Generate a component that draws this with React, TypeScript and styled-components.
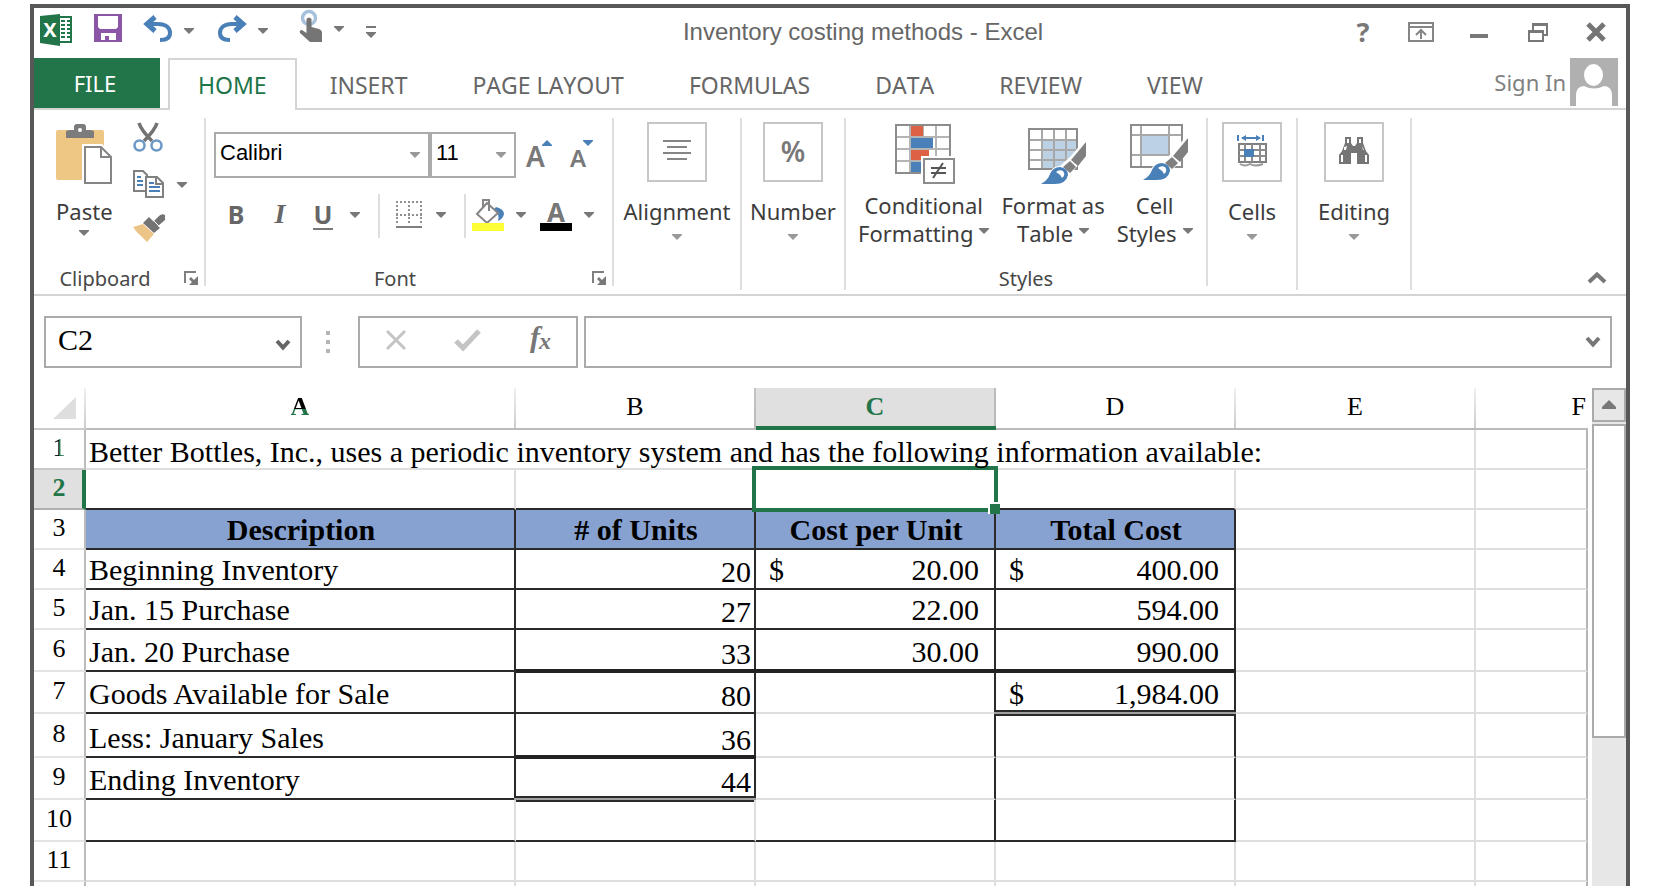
import React from "react";
import styled, { createGlobalStyle, css } from "styled-components";

const green = "#217549";
const line = "#d4d4d4";
const frame = "#585858";
const icon = "#787878";
const blue = "#4a80b8";
const ui = `"Noto Sans", "Open Sans", sans-serif`;
const arial = `"Liberation Sans", Arial, sans-serif`;
const times = `"Liberation Serif", "Times New Roman", serif`;

const GlobalStyle = createGlobalStyle`
  *, *::before, *::after { box-sizing: border-box; }
  body { margin: 0; background: #fff; font-family: ${ui}; overflow: hidden; }
  svg { display: block; flex: none; overflow: visible; }
  button, input, select { font: inherit; color: inherit; margin: 0; padding: 0; border: 0; background: none; border-radius: 0; outline: none; }
  button { cursor: pointer; white-space: nowrap; font-kerning: none; }
`;

const Window = styled.div`
  display: flex;
  flex-direction: column;
  height: calc(100vh - 4px);
  margin: 4px 50px 0 30px;
  border: 4px solid ${frame};
  border-bottom: 0;
`;

/* ---------- title bar ---------- */
const TitleBar = styled.header`
  display: flex;
  align-items: flex-start;
  height: 50px;
  padding: 0 20px 0 6px;
`;
const QuickAccess = styled.div`
  display: flex;
  gap: 22px;
  align-items: flex-start;
`;
const Tool = styled.button<{ $top?: number }>`
  display: flex;
  padding-top: ${(p) => p.$top ?? 0}px;
`;
const Split = styled.div<{ $width?: number }>`
  display: flex;
  gap: 12px;
  width: ${(p) => (p.$width ? `${p.$width}px` : "auto")};
`;
const Title = styled.h1`
  flex: 1;
  margin: 0;
  padding: 10px 6px 0 0;
  text-align: center;
  font: 400 24px/28px ${arial};
  color: #666;
`;
const WindowTools = styled.div`
  display: flex;
  gap: 38px;
  padding-top: 14px;
`;
const HelpButton = styled.button`
  width: 14px;
  height: 20px;
  font: 700 27px/20px ${ui};
  color: ${icon};
`;

/* ---------- tabs ---------- */
const TabBar = styled.nav`
  display: flex;
  flex: none;
  gap: 1px;
  height: 52px;
  box-shadow: inset 0 -2px ${line};
`;
const FileTab = styled.button`
  width: 126px;
  height: 50px;
  margin-right: 7px;
  padding-right: 4px;
  background: ${green};
  color: #fff;
  font-size: 22px;
`;
const Tab = styled.button<{ $active?: boolean }>`
  padding: 2px 32px 0;
  font-size: 23px;
  color: #666;
  ${(p) =>
    p.$active &&
    css`
      padding: 0 28px;
      border: 2px solid ${line};
      border-bottom: 0;
      background: #fff;
      color: ${green};
    `}
`;
const SignIn = styled.button`
  display: flex;
  align-items: center;
  gap: 4px;
  height: 48px;
  margin: 0 8px 0 auto;
  font-size: 22px;
  color: #808080;
`;

/* ---------- ribbon ---------- */
const Ribbon = styled.section`
  display: flex;
  flex: none;
  align-items: flex-start;
  height: 186px;
  padding-top: 8px;
  border-bottom: 2px solid ${line};
`;
const Group = styled.div<{ $width: number; $tall?: boolean }>`
  display: flex;
  flex-direction: column;
  justify-content: space-between;
  flex: none;
  width: ${(p) => p.$width}px;
  height: ${(p) => (p.$tall ? 172 : 168)}px;
  border-right: 2px solid #dedede;
  color: #3c3c3c;
`;
const Footer = styled.div`
  display: flex;
  align-items: center;
  height: 16px;
  font-size: 20px;
  line-height: 16px;
  color: #484848;
`;
const FooterLabel = styled.span`
  flex: 1;
  padding-top: 2px;
  text-align: center;
  white-space: nowrap;
`;
const LauncherButton = styled.button`
  margin: 0 6px 0 8px;
`;
const ClipboardBody = styled.div`
  display: flex;
  gap: 20px;
  padding: 4px 0 0 22px;
`;
const Stack = styled.div`
  display: grid;
  grid-template-rows: 48px 44px 30px;
  align-items: start;
`;
const BigButton = styled.button<{ $top?: number; $gap?: number; $caretGap?: number }>`
  display: flex;
  flex-direction: column;
  align-items: center;
  padding-top: ${(p) => p.$top ?? 0}px;
  font-size: 22px;
  line-height: 28px;
  & > span { margin-top: ${(p) => p.$gap ?? 15}px; }
  & > span + svg { margin-top: ${(p) => p.$caretGap ?? 9}px; }
`;
const IconBox = styled.div`
  display: flex;
  align-items: center;
  justify-content: center;
  width: 60px;
  height: 60px;
  padding-bottom: 2px;
  border: 2px solid #c6c6c6;
  font: 600 28px/28px ${ui};
  color: ${icon};
`;
const FontBody = styled.div`
  display: flex;
  flex-direction: column;
  gap: 16px;
  padding: 14px 0 0 8px;
`;
const FontRow = styled.div`
  display: flex;
  align-items: flex-start;
`;
const Combo = styled.label<{ $width: number }>`
  position: relative;
  flex: none;
  width: ${(p) => p.$width}px;
  height: 46px;
  border: 2px solid #aaa;
  select {
    width: 100%;
    height: 38px;
    padding-left: 4px;
    appearance: none;
    font: 22px/38px ${arial};
    color: #000;
  }
  svg { position: absolute; right: 8px; top: 18px; pointer-events: none; }
`;
const Resizers = styled.div`
  display: flex;
  padding-left: 10px;
`;
const Resize = styled.button<{ $size: number; $top: number }>`
  display: flex;
  width: 44px;
  padding-top: 8px;
  font: 600 ${(p) => p.$size}px/28px ${ui};
  color: ${icon};
  span { padding-top: ${(p) => p.$top}px; }
  svg { margin-left: -3px; }
`;
const Formats = styled.div`
  display: flex;
  align-items: flex-start;
  height: 44px;
`;
const Glyph = styled.button<{ $width: number; $left?: number; $size?: number; $family?: string; $italic?: boolean; $underline?: boolean }>`
  flex: none;
  width: ${(p) => p.$width}px;
  height: 36px;
  margin-left: ${(p) => p.$left ?? 0}px;
  padding-top: 2px;
  font: ${(p) => (p.$italic ? "italic" : "normal")} 700 ${(p) => p.$size ?? 25}px/36px ${(p) => p.$family ?? ui};
  color: #666;
  ${(p) => p.$underline && css`border-bottom: 2px solid #777;`}
`;
const FormatButton = styled.button<{ $left?: number; $right?: number }>`
  height: 44px;
  padding: 0 ${(p) => p.$right ?? 0}px 2px ${(p) => p.$left ?? 0}px;
`;
const Rule = styled.i`
  width: 2px;
  height: 44px;
  background: #dedede;
`;
const StylesBody = styled.div`
  display: flex;
  gap: 12px;
  padding: 6px 0 0 12px;
`;
const WithCaret = styled.em`
  display: flex;
  justify-content: center;
  gap: 6px;
  font-style: normal;
  svg { margin-top: 9px; }
`;
const Collapse = styled.button`
  margin: 153px 20px 0 auto;
`;

/* ---------- formula bar ---------- */
const FormulaBar = styled.section`
  display: flex;
  flex: none;
  height: 72px;
  margin: 20px 14px 0 10px;
`;
const Field = styled.div<{ $width?: number }>`
  display: flex;
  align-items: center;
  flex: ${(p) => (p.$width ? "none" : 1)};
  width: ${(p) => (p.$width ? `${p.$width}px` : "auto")};
  height: 52px;
  padding: 0 10px 0 12px;
  border: 2px solid #aaa;
  font: 30px/36px ${times};
  color: #000;
  input { flex: 1; min-width: 0; height: 44px; padding-bottom: 4px; }
`;
const NameField = styled(Field)`
  button { padding-top: 6px; }
`;
const Dots = styled.div`
  display: grid;
  gap: 5px;
  width: 56px;
  height: 52px;
  padding-right: 4px;
  align-content: center;
  justify-content: center;
  i { width: 4px; height: 4px; background: #b4b4b4; }
`;
const Entry = styled(Field)`
  justify-content: space-between;
  margin-right: 6px;
  padding: 0 24px 4px 25px;
`;

/* ---------- sheet ---------- */
const Sheet = styled.main`
  display: flex;
  flex: 1;
  gap: 4px;
  min-height: 0;
  overflow: hidden;
`;
const GridWrap = styled.div`
  flex: 1;
  min-width: 0;
`;
const Grid = styled.table`
  width: 100%;
  table-layout: fixed;
  border-collapse: separate;
  border-spacing: 0;
  font: 30px/32px ${times};
  color: #000;
`;
const Row = styled.tr<{ $height: number }>`
  height: ${(p) => p.$height}px;
`;
const ColHead = styled.th<{ $active?: boolean; $beforeActive?: boolean; $end?: boolean }>`
  padding: 0 2px 2px 0;
  border-bottom: 2px solid #bbb;
  background: linear-gradient(#f0f0f0, #ccc) right / 2px 100% no-repeat;
  font-size: 26px;
  line-height: 30px;
  font-weight: 400;
  ${(p) => p.$beforeActive && css`background: linear-gradient(#c4c4c4, #bbb) right / 2px 100% no-repeat;`}
  ${(p) => p.$end && css`background: none; text-align: right;`}
  ${(p) =>
    p.$active &&
    css`
      padding: 0 2px 0 0;
      border-bottom: 4px solid ${green};
      background: linear-gradient(#bbb, #bbb) right / 2px 100% no-repeat #e0e0e0;
      color: ${green};
      font-weight: 700;
    `}
`;
const Corner = styled.td`
  padding: 0 10px 0 0;
  border-bottom: 2px solid #ccc;
  background: linear-gradient(#f0f0f0, #ccc) right / 2px 100% no-repeat;
  svg { margin-left: auto; }
`;
const RowHead = styled.th<{ $active?: boolean; $next?: boolean }>`
  padding: 0 0 2px;
  border-right: 2px solid #bbb;
  border-bottom: 2px solid ${(p) => (p.$next ? "#c8c8c8" : "#e4e4e4")};
  font-size: 26px;
  line-height: 30px;
  font-weight: 400;
  ${(p) =>
    p.$active &&
    css`
      padding-left: 2px;
      border-right: 4px solid ${green};
      border-bottom-color: #b0b0b0;
      background: #e0e0e0;
      color: ${green};
      font-weight: 700;
    `}
`;
const HalfA = styled.b`
  background: linear-gradient(#000 60%, ${green} 60%);
  background-clip: text;
  color: transparent;
`;
const HalfOne = styled.span`
  background: linear-gradient(90deg, #000 50%, ${green} 50%);
  background-clip: text;
  color: transparent;
`;

type Edge = "thin" | "thick" | "double";
interface CellProps {
  $right?: boolean;
  $bottom?: Edge;
  $end?: boolean;
  $low?: boolean;
  $num?: boolean;
}
const cell = css<CellProps>`
  position: relative;
  padding: 0 3px ${(p) => (p.$num || p.$low ? 0 : 2)}px;
  vertical-align: bottom;
  text-align: ${(p) => (p.$num ? "right" : "left")};
  border-right: 2px solid ${(p) => (p.$right ? "#2a2a2a" : p.$end ? "#b4b4b4" : "#dedede")};
  border-bottom: 2px solid ${(p) => (p.$bottom ? "#2a2a2a" : "#dedede")};
  ${(p) =>
    p.$bottom === "thick" &&
    css`
      &::after { content: ""; position: absolute; left: 0; right: -2px; bottom: -3px; height: 4px; background: #222; }
    `}
  ${(p) =>
    p.$bottom === "double" &&
    css`
      &::after {
        content: "";
        position: absolute;
        left: -2px;
        right: -2px;
        bottom: -4px;
        height: 6px;
        border: solid #2a2a2a;
        border-width: 2px 0;
        background: #a0a0a0;
      }
    `}
`;
const Cell = styled.td<CellProps>`
  ${cell}
`;
const HeadCell = styled.th<CellProps>`
  ${cell}
  padding-left: 5px;
  text-align: center;
  background: #87a2d1;
`;
const Sentence = styled.span`
  position: relative;
  z-index: 2;
`;
const Money = styled.div`
  display: flex;
  justify-content: space-between;
  padding: 0 12px 0 10px;
  & > :only-child { margin-left: auto; }
`;
const Selection = styled.div`
  position: absolute;
  z-index: 1;
  inset: -4px;
  border: 4px solid ${green};
  &::after {
    content: "";
    position: absolute;
    right: -6px;
    bottom: -6px;
    width: 12px;
    height: 12px;
    border: solid #fff;
    border-width: 2px 0 0 2px;
    background: ${green};
  }
`;
const ScrollBar = styled.div`
  display: flex;
  flex-direction: column;
  gap: 2px;
  width: 34px;
  background: #e7e7e7;
`;
const ScrollUp = styled.button`
  display: flex;
  align-items: center;
  justify-content: center;
  height: 34px;
  padding-bottom: 2px;
  border: 2px solid #aaa;
`;
const Thumb = styled.div`
  height: 314px;
  border: 2px solid #aaa;
  background: #fff;
`;

/* ---------- icons ---------- */
const Caret = ({ color = icon }: { color?: string }) => (
  <svg width="10" height="6"><path d="M0 0H10V1L5 6L0 1Z" fill={color} /></svg>
);
const ExcelLogo = () => (
  <svg width="32" height="32">
    <rect x="18" y="3" width="13" height="25" fill="#fff" stroke="#217549" strokeWidth="2" />
    <path d="M21 7h4M27 7h3M21 11h4M27 11h3M21 15h4M27 15h3M21 19h4M27 19h3M21 23h4M27 23h3" stroke="#217549" strokeWidth="2" />
    <path d="M0 2L20 0V32L0 29Z" fill="#217549" />
    <text x="10" y="23" textAnchor="middle" fill="#fff" fontFamily="Noto Sans" fontWeight="700" fontSize="20">X</text>
  </svg>
);
const SaveIcon = () => (
  <svg width="28" height="28">
    <path d="M0 0H28V28H0Z" fill="#8c56a8" />
    <path d="M4 2H24V13L22 15H6L4 13Z" fill="#fff" />
    <path d="M7 19H22V26H15V22H11V26H7Z" fill="#fff" />
  </svg>
);
const UndoIcon = () => (
  <svg width="28" height="26" fill="none" stroke={blue} strokeWidth="4">
    <path d="M11 1L3 8L11 15" strokeWidth="5" />
    <path d="M3 8H14C22 8 26 12 26 17C26 21 23 24 16 24" />
  </svg>
);
const RedoIcon = () => (
  <svg width="28" height="26" fill="none" stroke={blue} strokeWidth="4">
    <path d="M17 1L25 8L17 15" strokeWidth="5" />
    <path d="M25 8H14C6 8 2 12 2 17C2 21 5 24 12 24" />
  </svg>
);
const TouchIcon = () => (
  <svg width="30" height="32">
    <circle cx="17" cy="8" r="6.500" fill="none" stroke="#a6c1dc" strokeWidth="3.500" />
    <path d="M14.500 9Q17 6 19.500 9V17L27 19Q30 20 30 23V32H18L8 23Q7 20 10 20L14.500 23Z" fill="#757575" />
  </svg>
);
const PasteIcon = () => (
  <svg width="56" height="60">
    <rect y="6" width="48" height="50" rx="2" fill="#efc784" />
    <path d="M10 14V8Q10 6 14 6H18V3Q18 0 21 0H27Q30 0 30 3V6H34Q38 6 38 8V14Z" fill="#7c7c7c" />
    <circle cx="24" cy="6" r="2" fill="#fff" />
    <path d="M29 23H45L55 33V59H29Z" fill="#fff" stroke="#fff" strokeWidth="6" />
    <path d="M29 23H45L55 33V59H29Z" fill="#fff" stroke="#858585" strokeWidth="2" />
    <path d="M45 23V33H55" fill="none" stroke="#858585" strokeWidth="2" />
  </svg>
);
const CutIcon = () => (
  <svg width="30" height="30" fill="none">
    <path d="M6 1Q8 8 19 19M24 1Q22 8 11 19" stroke="#737373" strokeWidth="3.500" />
    <circle cx="6.500" cy="23.500" r="5" stroke="#6c98c6" strokeWidth="2.500" />
    <circle cx="23.500" cy="23.500" r="5" stroke="#6c98c6" strokeWidth="2.500" />
  </svg>
);
const CopyIcon = () => (
  <svg width="32" height="28" fill="#fff" strokeWidth="2">
    <path d="M1 1H10L14 5V21H1Z" stroke="#808080" />
    <path d="M4 7H8M4 11H10M4 15H10" stroke={blue} />
    <path d="M13 7H24L30 13V27H13Z" stroke="#808080" />
    <path d="M23 7V14H30" stroke="#808080" fill="none" />
    <path d="M16 13H21M16 17H27M16 21H27" stroke={blue} />
  </svg>
);
const BrushIcon = () => (
  <svg width="32" height="28">
    <path d="M0 13L10 10L21 20L14 28Q10 24 8 22Q3 18 0 13Z" fill="#edc488" />
    <path d="M10 9L16 3L27 14L21 19Z" fill="#737373" />
    <path d="M20 8L26 2Q29 -1 32 1V6L25 12Z" fill="#737373" />
    <path d="M18 4L27 13" stroke="#fff" strokeWidth="1" />
  </svg>
);
const Launcher = () => (
  <svg width="14" height="14">
    <path d="M1 12V1H12" fill="none" stroke="#808080" strokeWidth="2" />
    <path d="M14 5V14H5L8 11L5 8L7 6L10 9Z" fill={icon} />
  </svg>
);
const BordersIcon = () => (
  <svg width="26" height="28" fill="none" stroke="#909090">
    <path d="M0 1H26M0 14H26" strokeWidth="2" strokeDasharray="2 2" />
    <path d="M1 0V24M13 0V24M25 0V24" strokeWidth="2" strokeDasharray="2 2" />
    <path d="M0 26H26" stroke="#808080" strokeWidth="2" />
  </svg>
);
const FillIcon = () => (
  <svg width="32" height="32">
    <path d="M24 8Q32 10 32 15Q31 20 26 22Q28 15 22 10Z" fill={blue} />
    <path d="M15 4L26 14L15 24L5 15Z" fill="#fff" stroke="#858585" strokeWidth="2" />
    <path d="M11 8V1H17V12" fill="none" stroke="#858585" strokeWidth="2" />
    <rect y="24" width="32" height="8" fill="#ffff38" />
  </svg>
);
const FontColorIcon = () => (
  <svg width="32" height="32">
    <text x="16" y="23" textAnchor="middle" fill="#777" fontFamily="Noto Sans" fontWeight="700" fontSize="26">A</text>
    <rect y="24" width="32" height="8" fill="#000" />
  </svg>
);
const AlignIcon = () => (
  <svg width="28" height="22" stroke="#858585" strokeWidth="2">
    <path d="M0 1H28M4 7H24M0 13H28M4 19H24" />
  </svg>
);
const ConditionalIcon = () => (
  <svg width="62" height="60" viewBox="-2 0 62 60">
    <path d="M1 1H55V49H1Z" fill="#fff" />
    <path d="M15 1V49M28 1V49M41 1V49M1 13H55M1 25H55M1 37H55" stroke="#b4b4b4" strokeWidth="2" />
    <path d="M1 1H55V49H1Z" fill="none" stroke="#8c8c8c" strokeWidth="2" />
    <path d="M16 2H28V12H16ZM16 26H34V36H16Z" fill="#dd6245" />
    <path d="M16 14H38V24H16ZM16 38H26V48H16Z" fill={blue} />
    <path d="M29 35H59V59H29Z" fill="#fff" stroke="#fff" strokeWidth="6" />
    <path d="M29 35H59V59H29Z" fill="#fff" stroke="#8c8c8c" strokeWidth="2" />
    <path d="M36 44H51M36 49H51M48 39L38 54" stroke="#555" strokeWidth="2" />
  </svg>
);
const BigBrush = () => (
  <g>
    <path d="M11 58Q19 52 21 46Q24 38 32 38L43 28L58 10V28L46 42L42 46Q42 52 36 56Q30 58 11 58Z" fill="#fff" />
    <path d="M43 32L58 14V28L50 38Z" fill="#808080" />
    <path d="M35 39L42 33L48 39L42 45Z" fill="#808080" />
    <path d="M13 56Q20 52 22 46Q25 39 32 39Q40 40 40 47Q38 56 27 56Z" fill={blue} />
    <path d="M28 44Q31 41 35 43Q38 47 34 50Q32 46 28 44Z" fill="#fff" />
  </g>
);
const FormatTableIcon = () => (
  <svg width="66" height="60" viewBox="-8 0 66 60">
    <g transform="translate(0 4)">
      <path d="M14 12H49V41H14Z" fill="#bdd1e5" />
      <path d="M14 1V42M26 1V42M38 1V42M1 12H49M1 22H49M1 32H49" stroke="#a8a8a8" strokeWidth="2" />
      <path d="M1 1H49V41H1Z" fill="none" stroke="#8c8c8c" strokeWidth="2" />
      <BigBrush />
    </g>
  </svg>
);
const CellStylesIcon = () => (
  <svg width="66" height="60" viewBox="-8 0 66 60">
    <path d="M12 12H39V31H12Z" fill="#bdd1e5" />
    <path d="M11 1V43M39 1V43M1 11H52M1 31H52" stroke="#a8a8a8" strokeWidth="2" />
    <path d="M1 1H52V43H1Z" fill="none" stroke="#8c8c8c" strokeWidth="2" />
    <BigBrush />
  </svg>
);
const CellsIcon = () => (
  <svg width="30" height="32" fill="none">
    <path d="M1 0V6M26 0V6M5 3H23" stroke={blue} strokeWidth="2" />
    <path d="M4 3L9 0V6ZM24 3L19 0V6Z" fill={blue} />
    <path d="M2 9H29V27H2Z" stroke="#808080" strokeWidth="2" />
    <path d="M8 9V27M15 9V27M23 9V27M2 15H29M2 21H29" stroke="#8c8c8c" strokeWidth="2" />
    <path d="M7 14H17V22H7Z" fill={blue} />
    <path d="M3 29Q8 32 13 29Q18 32 26 29" stroke="#999" strokeWidth="2" />
  </svg>
);
const BinocularsIcon = () => (
  <svg width="30" height="28">
    <path d="M6 0H12V6L14 9H16L18 6V0H24V6L27 14L30 18V27H18V16H12V27H0V18L3 14L6 6Z" fill="#757575" />
    <path d="M8 2V6H10V2ZM20 2V6H22V2ZM2 18V25H4V18ZM26 18V25H28V18ZM5 10V13H7L8 9ZM23 9L24 13H25Z" fill="#fff" />
  </svg>
);
const RibbonOptions = () => (
  <svg width="26" height="20" fill="none" stroke="#858585" strokeWidth="2">
    <path d="M1 1H25V19H1ZM1 5H25M13 17V9M8 13L13 8L18 13" />
  </svg>
);
const RestoreIcon = () => (
  <svg width="20" height="20" fill="none" stroke={icon} strokeWidth="2">
    <path d="M1 9H15V19H1ZM1 10H15M5 8V2H19V13H16M5 3H19" />
  </svg>
);
const Cross = () => (
  <svg width="20" height="20"><path d="M2 2L18 18M18 2L2 18" stroke="#757575" strokeWidth="5" /></svg>
);
const Avatar = () => (
  <svg width="48" height="48">
    <path d="M0 0H48V48H0Z" fill="#b0b0b0" />
    <path d="M6 48V38Q6 28 14 28Q24 33 34 28Q42 28 42 38V48Z" fill="#fff" />
    <ellipse cx="23.500" cy="17" rx="10.500" ry="12" fill="#fff" stroke="#b0b0b0" strokeWidth="2" />
  </svg>
);
const Chevron = ({ color = "#666" }: { color?: string }) => (
  <svg width="14" height="12" fill="none" stroke={color} strokeWidth="4"><path d="M1 2L7 8.500L13 2" /></svg>
);

interface EntryRow {
  no: number;
  height: number;
  label?: string;
  units?: string;
  unitCost?: string[];
  total?: string[];
  edges: [Edge?, Edge?, Edge?, Edge?];
  sides: [boolean, boolean, boolean, boolean];
}
const all: [boolean, boolean, boolean, boolean] = [true, true, true, true];
const entries: EntryRow[] = [
  { no: 4, height: 40, label: "Beginning Inventory", units: "20", unitCost: ["$", "20.00"], total: ["$", "400.00"], edges: ["thin", "thin", "thin", "thin"], sides: all },
  { no: 5, height: 40, label: "Jan. 15 Purchase", units: "27", unitCost: ["22.00"], total: ["594.00"], edges: ["thin", "thin", "thin", "thin"], sides: all },
  { no: 6, height: 42, label: "Jan. 20 Purchase", units: "33", unitCost: ["30.00"], total: ["990.00"], edges: ["thin", "thick", "thick", "thick"], sides: all },
  { no: 7, height: 42, label: "Goods Available for Sale", units: "80", total: ["$", "1,984.00"], edges: ["thin", "thin", undefined, "double"], sides: all },
  { no: 8, height: 44, label: "Less: January Sales", units: "36", edges: ["thin", "thick"], sides: all },
  { no: 9, height: 42, label: "Ending Inventory", units: "44", edges: ["thin", "double"], sides: all },
  { no: 10, height: 42, edges: ["thin", "thin", "thin", "thin"], sides: [false, false, true, true] },
  { no: 11, height: 40, edges: [], sides: [false, false, false, false] },
];
const money = (parts?: string[]) => parts && <Money>{parts.map((p) => <span key={p}>{p}</span>)}</Money>;

export default function App() {
  return (
    <>
      <GlobalStyle />
      <Window>
        <TitleBar>
          <QuickAccess>
            <Tool $top={6} aria-label="Excel"><ExcelLogo /></Tool>
            <Tool $top={6} aria-label="Save"><SaveIcon /></Tool>
            <Split $width={52}>
              <Tool $top={8} aria-label="Undo"><UndoIcon /></Tool>
              <Tool $top={20} aria-label="Undo history"><Caret /></Tool>
            </Split>
            <Split $width={52}>
              <Tool $top={8} aria-label="Redo"><RedoIcon /></Tool>
              <Tool $top={20} aria-label="Redo history"><Caret /></Tool>
            </Split>
            <Split>
              <Tool $top={2} aria-label="Touch mode"><TouchIcon /></Tool>
              <Tool $top={18} aria-label="Touch options"><Caret /></Tool>
            </Split>
            <Tool $top={18} aria-label="Customize toolbar">
              <svg width="10" height="12" fill={icon}><path d="M0 0H10V2H0ZM0 6H10V7L5 12L0 7Z" /></svg>
            </Tool>
          </QuickAccess>
          <Title>Inventory costing methods - Excel</Title>
          <WindowTools>
            <HelpButton>?</HelpButton>
            <Tool aria-label="Ribbon display options"><RibbonOptions /></Tool>
            <Tool aria-label="Minimize"><svg width="18" height="20"><path d="M-2 14H16" stroke={icon} strokeWidth="4" /></svg></Tool>
            <Tool aria-label="Restore"><RestoreIcon /></Tool>
            <Tool aria-label="Close"><Cross /></Tool>
          </WindowTools>
        </TitleBar>

        <TabBar>
          <FileTab>FILE</FileTab>
          <Tab $active>HOME</Tab>
          {["INSERT", "PAGE LAYOUT", "FORMULAS", "DATA", "REVIEW", "VIEW"].map((t) => <Tab key={t}>{t}</Tab>)}
          <SignIn>Sign In<Avatar /></SignIn>
        </TabBar>

        <Ribbon>
          <Group $width={172}>
            <ClipboardBody>
              <BigButton $top={2} $gap={13} $caretGap={5}><PasteIcon /><span>Paste</span><Caret /></BigButton>
              <Stack>
                <Tool aria-label="Cut"><CutIcon /></Tool>
                <Split>
                  <Tool aria-label="Copy"><CopyIcon /></Tool>
                  <Tool $top={12} aria-label="Copy options"><Caret /></Tool>
                </Split>
                <Tool aria-label="Format painter"><BrushIcon /></Tool>
              </Stack>
            </ClipboardBody>
            <Footer><FooterLabel>Clipboard</FooterLabel><LauncherButton aria-label="Clipboard settings"><Launcher /></LauncherButton></Footer>
          </Group>

          <Group $width={408}>
            <FontBody>
              <FontRow>
                <Combo $width={216}>
                  <select aria-label="Font"><option>Calibri</option></select>
                  <Caret color="#999" />
                </Combo>
                <Combo $width={86}>
                  <select aria-label="Font size"><option>11</option></select>
                  <Caret color="#999" />
                </Combo>
                <Resizers>
                  <Resize $size={28} $top={2} aria-label="Increase font size"><span>A</span><svg width="10" height="6"><path d="M0 6V5L5 0L10 5V6Z" fill={blue} /></svg></Resize>
                  <Resize $size={24} $top={4} aria-label="Decrease font size"><span>A</span><svg width="10" height="6"><path d="M0 0H10V1L5 6L0 1Z" fill={blue} /></svg></Resize>
                </Resizers>
              </FontRow>
              <Formats>
                <Glyph $width={44}>B</Glyph>
                <Glyph $width={44} $family={times} $italic $size={28}>I</Glyph>
                <Glyph $width={20} $left={11} $underline>U</Glyph>
                <FormatButton $left={17} $right={18} aria-label="Underline options"><Caret /></FormatButton>
                <Rule />
                <FormatButton $left={16} aria-label="Borders"><BordersIcon /></FormatButton>
                <FormatButton $left={14} $right={18} aria-label="Border options"><Caret /></FormatButton>
                <Rule />
                <FormatButton $left={6} aria-label="Fill color"><FillIcon /></FormatButton>
                <FormatButton $left={12} $right={14} aria-label="Fill options"><Caret /></FormatButton>
                <FormatButton aria-label="Font color"><FontColorIcon /></FormatButton>
                <FormatButton $left={12} aria-label="Font color options"><Caret /></FormatButton>
              </Formats>
            </FontBody>
            <Footer><FooterLabel>Font</FooterLabel><LauncherButton aria-label="Font settings"><Launcher /></LauncherButton></Footer>
          </Group>

          <Group $width={128} $tall>
            <BigButton $top={4}><IconBox><AlignIcon /></IconBox><span>Alignment</span><Caret color="#999" /></BigButton>
          </Group>
          <Group $width={104} $tall>
            <BigButton $top={4}><IconBox>%</IconBox><span>Number</span><Caret color="#999" /></BigButton>
          </Group>

          <Group $width={362}>
            <StylesBody>
              <BigButton $gap={7}><ConditionalIcon /><span>Conditional<WithCaret>Formatting<Caret /></WithCaret></span></BigButton>
              <BigButton $gap={7}><FormatTableIcon /><span>Format as<WithCaret>Table<Caret /></WithCaret></span></BigButton>
              <BigButton $gap={7}><CellStylesIcon /><span>Cell<WithCaret>Styles<Caret /></WithCaret></span></BigButton>
            </StylesBody>
            <Footer><FooterLabel>Styles</FooterLabel></Footer>
          </Group>

          <Group $width={90} $tall>
            <BigButton $top={4}><IconBox><CellsIcon /></IconBox><span>Cells</span><Caret color="#999" /></BigButton>
          </Group>
          <Group $width={114} $tall>
            <BigButton $top={4}><IconBox><BinocularsIcon /></IconBox><span>Editing</span><Caret color="#999" /></BigButton>
          </Group>
          <Collapse aria-label="Collapse ribbon">
            <svg width="18" height="13" fill="none" stroke={icon} strokeWidth="4"><path d="M1 11L9 3.500L17 11" /></svg>
          </Collapse>
        </Ribbon>

        <FormulaBar>
          <NameField $width={258}>
            <input aria-label="Name box" defaultValue="C2" />
            <button aria-label="Open name list"><Chevron /></button>
          </NameField>
          <Dots><i /><i /><i /></Dots>
          <Entry $width={220}>
            <button aria-label="Cancel"><svg width="22" height="20" fill="none" stroke="#c4c4c4" strokeWidth="3"><path d="M2 1L20 19M20 1L2 19" /></svg></button>
            <button aria-label="Enter"><svg width="26" height="22" fill="none" stroke="#c4c4c4" strokeWidth="5"><path d="M1 12L8 19L24 2" /></svg></button>
            <button aria-label="Insert function">
              <svg width="24" height="28" fill="#777" fontFamily="Liberation Serif" fontStyle="italic" fontWeight="700">
                <text x="2" y="21" fontSize="30">f</text>
                <text x="11" y="23" fontSize="24">x</text>
              </svg>
            </button>
          </Entry>
          <Field>
            <input aria-label="Formula" />
            <button aria-label="Expand formula bar"><Chevron color="#777" /></button>
          </Field>
        </FormulaBar>

        <Sheet>
          <GridWrap>
            <Grid>
              <colgroup>
                <col width="52" /><col width="430" /><col width="240" /><col width="240" /><col width="240" /><col width="240" /><col />
              </colgroup>
              <thead>
                <Row $height={42}>
                  <Corner><svg width="23" height="22"><path d="M23 0V22H0Z" fill="#dedede" /></svg></Corner>
                  <ColHead scope="col"><HalfA>A</HalfA></ColHead>
                  <ColHead scope="col" $beforeActive>B</ColHead>
                  <ColHead scope="col" $active>C</ColHead>
                  <ColHead scope="col">D</ColHead>
                  <ColHead scope="col">E</ColHead>
                  <ColHead scope="col" $end>F</ColHead>
                </Row>
              </thead>
              <tbody>
                <Row $height={40}>
                  <RowHead scope="row" $next><HalfOne>1</HalfOne></RowHead>
                  <Cell colSpan={5} $low><Sentence>Better Bottles, Inc., uses a periodic inventory system and has the following information available:</Sentence></Cell>
                  <Cell $end />
                </Row>
                <Row $height={40}>
                  <RowHead scope="row" $active>2</RowHead>
                  <Cell $bottom="thin" />
                  <Cell $bottom="thin" />
                  <Cell $bottom="thin"><Selection /></Cell>
                  <Cell $bottom="thin" />
                  <Cell />
                  <Cell $end />
                </Row>
                <Row $height={40}>
                  <RowHead scope="row">3</RowHead>
                  {["Description", "# of Units", "Cost per Unit", "Total Cost"].map((h) => (
                    <HeadCell key={h} $right $bottom="thin">{h}</HeadCell>
                  ))}
                  <Cell />
                  <Cell $end />
                </Row>
                {entries.map((r) => (
                  <Row key={r.no} $height={r.height}>
                    <RowHead scope="row">{r.no}</RowHead>
                    <Cell $right={r.sides[0]} $bottom={r.edges[0]}>{r.label}</Cell>
                    <Cell $num $right={r.sides[1]} $bottom={r.edges[1]}>{r.units}</Cell>
                    <Cell $right={r.sides[2]} $bottom={r.edges[2]}>{money(r.unitCost)}</Cell>
                    <Cell $right={r.sides[3]} $bottom={r.edges[3]}>{money(r.total)}</Cell>
                    <Cell />
                    <Cell $end />
                  </Row>
                ))}
                <Row $height={40}>
                  <RowHead scope="row" />
                  <Cell /><Cell /><Cell /><Cell /><Cell /><Cell $end />
                </Row>
              </tbody>
            </Grid>
          </GridWrap>
          <ScrollBar>
            <ScrollUp aria-label="Scroll up"><svg width="14" height="9"><path d="M0 9V7L7 0L14 7V9Z" fill="#777" /></svg></ScrollUp>
            <Thumb />
          </ScrollBar>
        </Sheet>
      </Window>
    </>
  );
}
